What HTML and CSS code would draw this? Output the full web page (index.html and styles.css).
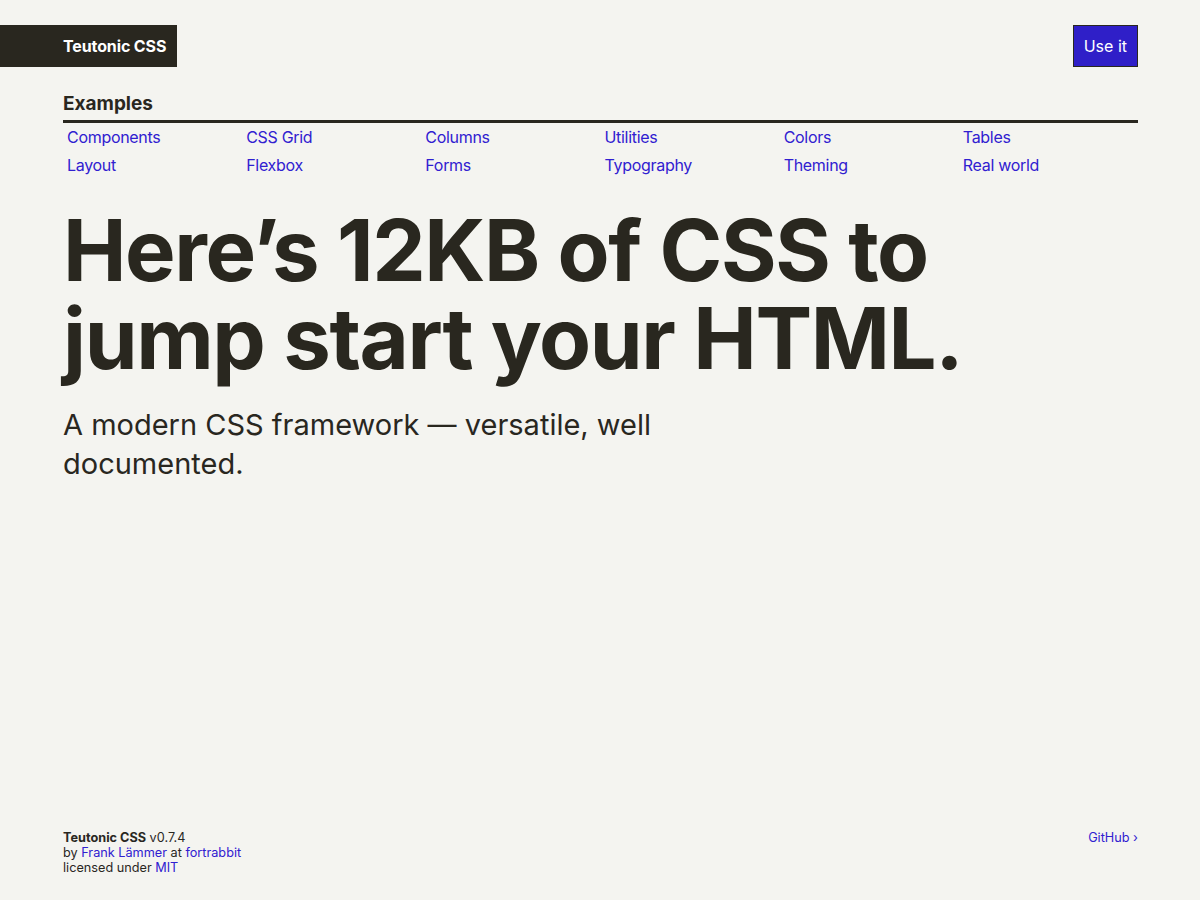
FILE: index.html
```html
<!DOCTYPE html>
<html lang="en">
<head>
<meta charset="utf-8">
<title>Teutonic CSS</title>
<link rel="stylesheet" href="styles.css">
</head>
<body>
<div class="page">
  <header class="topbar">
    <a class="logo" href="#">Teutonic CSS</a>
    <a class="cta" href="#">Use it</a>
  </header>
  <main class="main">
    <section class="examples">
      <h2 class="examples-title">Examples</h2>
      <ul class="examples-grid">
        <li><a href="#">Components</a></li>
        <li><a href="#">CSS Grid</a></li>
        <li><a href="#">Columns</a></li>
        <li><a href="#">Utilities</a></li>
        <li><a href="#">Colors</a></li>
        <li><a href="#">Tables</a></li>
        <li><a href="#">Layout</a></li>
        <li><a href="#">Flexbox</a></li>
        <li><a href="#">Forms</a></li>
        <li><a href="#">Typography</a></li>
        <li><a href="#">Theming</a></li>
        <li><a href="#">Real world</a></li>
      </ul>
    </section>
    <h1 class="hero">Here’s 12KB of CSS to jump start your HTML.</h1>
    <p class="lead">A modern CSS framework — versatile, well documented.</p>
  </main>
  <footer class="footer">
    <div class="credits">
      <div><strong>Teutonic CSS</strong> v0.7.4</div>
      <div>by <a href="#">Frank Lämmer</a> at <a href="#">fortrabbit</a></div>
      <div>licensed under <a href="#">MIT</a></div>
    </div>
    <a class="github" href="#">GitHub ›</a>
  </footer>
</div>
</body>
</html>
```

FILE: styles.css
```css
* { box-sizing: border-box; }
html, body { margin: 0; padding: 0; }
body {
  background: #f4f4f0;
  color: #29271f;
  font-family: Inter, "Noto Sans", "Liberation Sans", sans-serif;
  -webkit-font-smoothing: antialiased;
}
a { color: #3020d0; text-decoration: none; }

.page {
  min-height: 100vh;
  display: flex;
  flex-direction: column;
}

.topbar {
  display: flex;
  justify-content: space-between;
  align-items: flex-start;
  padding: 25px 62px 0 0;
}
.logo {
  display: flex;
  align-items: center;
  height: 42px;
  padding: 0 11px 0 63px;
  background: #29271f;
  color: #ffffff;
  font-weight: 700;
  font-size: 16px;
  letter-spacing: -0.12px;
}
.cta {
  display: flex;
  align-items: center;
  height: 42px;
  padding: 0 10px 0 9.5px;
  background: #2f1fc8;
  border: 1px solid #29271f;
  color: #ffffff;
  font-size: 16px;
}

.main {
  padding: 0 62px 0 63px;
}
.examples { margin-top: 26px; }
.examples-title {
  margin: 0;
  font-size: 19px;
  font-weight: 700;
  line-height: 22px;
  letter-spacing: 0;
  padding-bottom: 5px;
  border-bottom: 3px solid #29271f;
}
.examples-grid {
  list-style: none;
  margin: 0;
  padding: 0;
  display: grid;
  grid-template-columns: repeat(6, 1fr);
}
.examples-grid li {
  padding-left: 4px;
  font-size: 16px;
  line-height: 28px;
  letter-spacing: -0.3px;
}

.hero {
  margin: 28px 0 0;
  font-size: 85px;
  line-height: 88px;
  font-weight: 700;
  letter-spacing: -1.4px;
  max-width: 940px;
}
.lead {
  margin: 22px 0 0;
  font-size: 29px;
  line-height: 39px;
  font-weight: 400;
  max-width: 620px;
  letter-spacing: 0;
}

.footer {
  margin-top: auto;
  display: flex;
  justify-content: space-between;
  align-items: flex-start;
  padding: 0 62px 25px 63px;
  font-size: 12.7px;
  line-height: 15px;
}
.credits strong { font-weight: 700; }
.github { font-size: 12.7px; }
```
